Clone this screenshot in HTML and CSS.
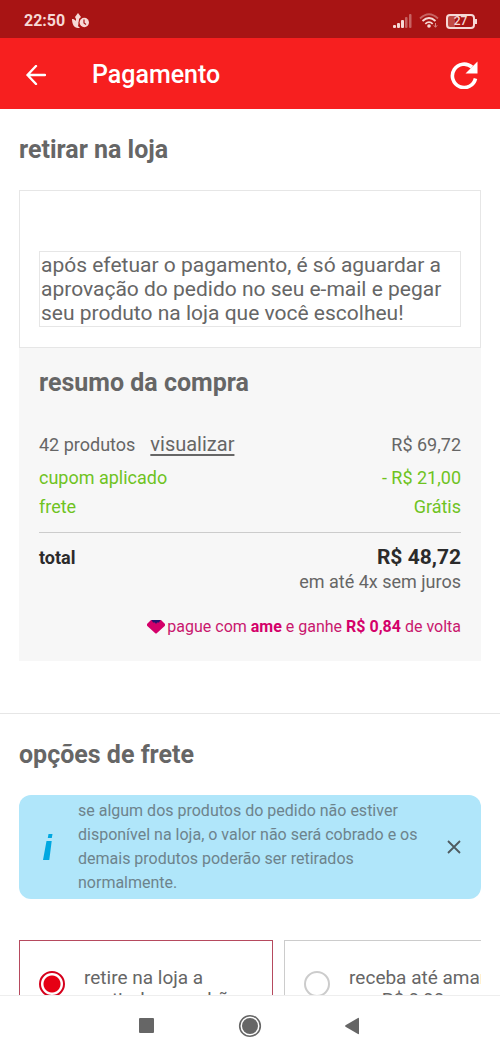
FILE: index.html
```html
<!DOCTYPE html>
<html lang="pt-BR">
<head>
<meta charset="utf-8">
<meta name="viewport" content="width=device-width, initial-scale=1">
<title>Pagamento</title>
<link rel="stylesheet" href="styles.css">
</head>
<body>
<div class="status">
  <div class="status-group">
    <span class="clock">22:50</span>
    <svg width="18" height="16" viewBox="0 0 18 16" fill="#f6d9d6"><path d="M6 0l3 4-2 2v3l-1 4-2-4V6L3 4zM0 6c3 0 5 2 6 7l2 2H6C2 15 0 11 0 6z"/><circle cx="12" cy="9.500" r="5.500" fill="#b01414"/><circle cx="12.300" cy="9.500" r="4.700"/><path d="M12 6.500V10l2 1.500" fill="none" stroke="#a81414" stroke-width="1.200"/></svg>
  </div>
  <div class="status-group status-right">
    <svg width="19" height="15" viewBox="0 0 19 15" fill="#f6d9d6"><rect y="11" width="3" height="3" rx="1"/><rect x="4" y="9" width="3" height="5" rx="1"/><rect x="8" y="6" width="3" height="8" rx="1"/><g opacity=".4"><rect x="12" y="3" width="2.500" height="11" rx="1"/><rect x="16" y="0" width="2.500" height="14" rx="1"/></g></svg>
    <svg width="20" height="16" viewBox="0 0 20 16" fill="none" stroke="#f6d9d6" stroke-width="1.800"><path d="M1 5.500Q10-3 19 5.500" opacity=".4"/><path d="M3.500 8Q10 2 16.500 8M6.300 10.800Q10 7.500 13.700 10.800"/><circle cx="10" cy="13" r="1.800" fill="#f6d9d6" stroke="none"/><path d="M16.500 10v3.500M14.800 12.300l1.700 2 1.700-2" stroke-width="1" opacity=".6"/></svg>
    <span class="battery">27</span>
  </div>
</div>
<header class="bar">
  <button class="icon-button" type="button" aria-label="Voltar"><svg width="20" height="20" viewBox="0 0 20 20" fill="none" stroke="#fff" stroke-width="2.400" stroke-linecap="round" stroke-linejoin="round"><path d="M19 10H1.500M10 1L1.500 10l8.500 9"/></svg></button>
  <h1 class="bar-title">Pagamento</h1>
  <button class="icon-button" type="button" aria-label="Atualizar"><svg width="28" height="28" viewBox="0 0 28 28" fill="none" stroke="#fff" stroke-width="3.600"><path d="M22 6.200A11.700 11.700 0 1 0 25.500 17.500"/><path d="M27.500.5V12.500H15.500z" fill="#fff" stroke="none"/></svg></button>
</header>
<main class="content">
  <section class="section">
    <h2 class="title">retirar na loja</h2>
    <div class="pickup"><p class="pickup-text">após efetuar o pagamento, é só aguardar a aprovação do pedido no seu e-mail e pegar seu produto na loja que você escolheu!</p></div>
    <div class="summary">
      <h2 class="title">resumo da compra</h2>
      <div class="row products"><span>42 produtos</span><a class="view" href="#">visualizar</a><span class="amount">R$ 69,72</span></div>
      <div class="row green"><span>cupom aplicado</span><span class="amount">- R$ 21,00</span></div>
      <div class="row green"><span>frete</span><span class="amount">Grátis</span></div>
      <div class="row total"><strong>total</strong><strong class="amount total-value">R$ 48,72</strong></div>
      <p class="terms">em até 4x sem juros</p>
      <p class="cashback"><svg width="18" height="14" viewBox="0 0 18 14"><path d="M4 0h10l4 4q.5 1-.3 2L10 13q-1 1-2 0L.3 6Q-.5 5 0 4z" fill="#d4006a"/><path d="M4.500 0h9l-1.500 2.500H10L9 4 8 2.500H6z" fill="#26136e"/></svg><span>pague com <b>ame</b> e ganhe <b>R$ 0,84</b> de volta</span></p>
    </div>
  </section>
  <section class="section shipping">
    <h2 class="title">opções de frete</h2>
    <div class="notice">
      <svg class="info" width="10" height="26" viewBox="0 0 10 26" fill="#00a8e1"><path d="M5.500 0H9.500L8.800 4H4.800zM3.500 7H8.700L6.300 26H0z"/></svg>
      <p class="notice-text">se algum dos produtos do pedido não estiver disponível na loja, o valor não será cobrado e os demais produtos poderão ser retirados normalmente.</p>
      <button class="icon-button" type="button" aria-label="Fechar"><svg width="14" height="14" viewBox="0 0 14 14" stroke="#4f5b60" stroke-width="1.800"><path d="M1 1l12 12M13 1L1 13"/></svg></button>
    </div>
    <div class="options">
      <label class="option selected"><input class="radio" type="radio" name="frete" checked><span>retire na loja a<br>partir de amanhã</span></label>
      <label class="option"><input class="radio" type="radio" name="frete"><span>receba até amanhã<br>por R$ 9,99</span></label>
    </div>
  </section>
</main>
<nav class="nav" aria-label="Sistema">
  <button class="icon-button" type="button" aria-label="Recentes"><svg width="24" height="24" viewBox="0 0 24 24" fill="#666"><rect x="4" y="4" width="15" height="15" rx="1"/></svg></button>
  <button class="icon-button" type="button" aria-label="Início"><svg width="24" height="24" viewBox="0 0 24 24" fill="#666"><circle cx="12" cy="12" r="10.300" fill="none" stroke="#666" stroke-width="1.600"/><circle cx="12" cy="12" r="8"/></svg></button>
  <button class="icon-button" type="button" aria-label="Retornar"><svg width="24" height="24" viewBox="0 0 24 24" fill="#666"><path d="M18 4.500v15q0 1-1 .5L4.500 12.700q-1-.7 0-1.400L17 4q1-.5 1 .5z"/></svg></button>
</nav>
</body>
</html>
```
FILE: styles.css
```css
* { box-sizing: border-box; }
body {
  margin: 0;
  height: 100vh;
  display: flex;
  flex-direction: column;
  background: #fff;
  color: #666;
  font: 18px/24px Roboto, sans-serif;
}
h1, h2, p { margin: 0; }
svg { display: block; flex: none; }
.icon-button { display: flex; flex: none; padding: 0; border: 0; background: none; cursor: pointer; }

.status {
  flex: none;
  display: flex;
  justify-content: space-between;
  align-items: center;
  height: 38px;
  padding: 4px 25px 0 24px;
  background: #a81414;
  color: #f6d9d6;
}
.status-group { display: flex; align-items: center; gap: 7px; }
.clock { font-size: 16px; font-weight: 700; }
.battery {
  position: relative;
  width: 29px;
  border: 2px solid #f6d9d6;
  border-radius: 4px;
  font-size: 12px;
  line-height: 11px;
  font-weight: 500;
  text-align: center;
  background: linear-gradient(90deg, #c04a44 27%, transparent 27%);
}
.battery::after {
  content: "";
  position: absolute;
  right: -4px;
  top: 3px;
  width: 2px;
  height: 5px;
  background: #f6d9d6;
}

.bar {
  flex: none;
  display: flex;
  align-items: center;
  height: 71px;
  padding: 2px 22px 0 26px;
  background: #f71f1f;
  color: #fff;
}
.bar-title { flex: 1; margin-left: 46px; font-size: 25px; line-height: 32px; font-weight: 500; }

.content { flex: 1; min-height: 0; overflow: hidden; }
.section { padding: 25px 19px 52px; }
.title { font-size: 25px; line-height: 32px; font-weight: 700; }
.pickup {
  margin-top: 24px;
  padding: 60px 19px 20px;
  border: 1px solid #e6e6e6;
}
.pickup-text { padding: 1px; border: 1px solid #e6e6e6; font-size: 21px; }
.summary { padding: 19px 20px 22px; background: #f7f7f7; }
.row { display: flex; align-items: baseline; line-height: 29px; }
.amount { margin-left: auto; }
.products { margin-top: 31px; padding-bottom: 4px; }
.view { margin-left: 15px; color: inherit; font-size: 20px; text-underline-offset: 3px; }
.green { color: #6fc31f; }
.total { margin-top: 11px; padding-top: 10px; border-top: 1px solid #ccc; color: #2b2b2b; }
.total-value { font-size: 21px; }
.terms { text-align: right; line-height: 20px; }
.cashback {
  display: flex;
  justify-content: flex-end;
  align-items: center;
  gap: 2px;
  margin-top: 23px;
  color: #c9186e;
  font-size: 16px;
}
.cashback b { color: #d4006a; }

.shipping { border-top: 1px solid #e6e6e6; }
.notice {
  display: flex;
  align-items: center;
  margin-top: 24px;
  padding: 4px 20px 4px 24px;
  border-radius: 12px;
  background: #b0e6fa;
}
.notice-text { flex: 1; margin: 0 25px; color: #6d838c; font-size: 16px; }
.options { display: flex; gap: 11px; margin-top: 41px; overflow: hidden; }
.option {
  flex: 0 0 55%;
  display: flex;
  align-items: flex-start;
  gap: 19px;
  padding: 26px 19px;
  border: 1px solid #ccc;
  line-height: 22px;
  font-size: 19px;
  white-space: nowrap;
}
.selected { border-color: #b64a5e; }
.radio {
  appearance: none;
  flex: none;
  width: 26px;
  height: 26px;
  margin: 4px 0 0;
  border: 2px solid #ccc;
  border-radius: 50%;
}
.radio:checked { border-color: #d5001c; background: radial-gradient(circle, #e60014 8px, #fff 9px); }

.nav {
  flex: none;
  display: flex;
  justify-content: center;
  align-items: center;
  gap: 79px;
  height: 61px;
  border-top: 1px solid #eee;
  background: #fff;
}
```
